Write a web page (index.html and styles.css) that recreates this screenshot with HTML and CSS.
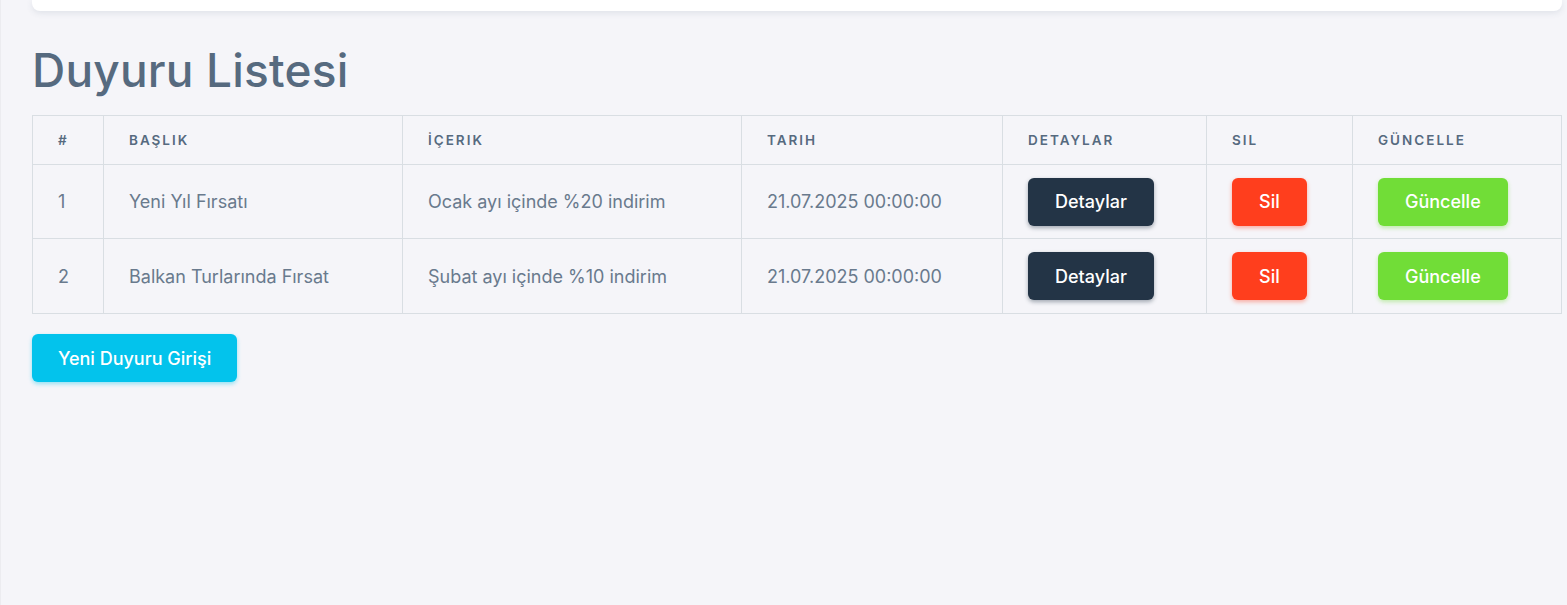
FILE: index.html
```html
<!DOCTYPE html>
<html lang="en">
<head>
<meta charset="utf-8">
<title>Duyuru Listesi</title>
<link rel="stylesheet" href="styles.css">
</head>
<body>
<div class="page">
  <div class="topbar"></div>
  <h1 class="title">Duyuru Listesi</h1>
  <table class="list">
    <colgroup>
      <col class="c-num"><col class="c-title"><col class="c-content"><col class="c-date"><col class="c-det"><col class="c-del"><col class="c-upd">
    </colgroup>
    <thead>
      <tr><th>#</th><th>BAŞLIK</th><th>İÇERIK</th><th>TARIH</th><th>DETAYLAR</th><th>SIL</th><th>GÜNCELLE</th></tr>
    </thead>
    <tbody>
      <tr>
        <td>1</td><td>Yeni Yıl Fırsatı</td><td>Ocak ayı içinde %20 indirim</td><td>21.07.2025 00:00:00</td>
        <td><a class="btn btn-dark">Detaylar</a></td>
        <td><a class="btn btn-danger">Sil</a></td>
        <td><a class="btn btn-success">Güncelle</a></td>
      </tr>
      <tr>
        <td>2</td><td>Balkan Turlarında Fırsat</td><td>Şubat ayı içinde %10 indirim</td><td>21.07.2025 00:00:00</td>
        <td><a class="btn btn-dark">Detaylar</a></td>
        <td><a class="btn btn-danger">Sil</a></td>
        <td><a class="btn btn-success">Güncelle</a></td>
      </tr>
    </tbody>
  </table>
  <div class="actions"><a class="btn btn-info">Yeni Duyuru Girişi</a></div>
</div>
</body>
</html>
```

FILE: styles.css
```css
html, body {
  margin: 0;
  padding: 0;
  height: 100%;
}
body {
  background: #f5f5f9;
  font-family: "Inter", "Noto Sans", sans-serif;
  color: #697a8d;
  border-left: 1px solid #ececf0;
  box-sizing: border-box;
}
.page {
  padding: 0 5px 0 31px;
}
.topbar {
  height: 11px;
  background: #fff;
  border-radius: 0 0 8px 8px;
  box-shadow: 0 2px 6px rgba(67, 89, 113, 0.12);
}
.title {
  margin: 34px 0 20px 0;
  font-size: 46px;
  line-height: 50px;
  font-weight: 500;
  color: #566a7f;
  letter-spacing: 0.2px;
}
.list {
  width: 100%;
  border-collapse: collapse;
  table-layout: fixed;
}
.c-num { width: 71px; }
.c-title { width: 299px; }
.c-content { width: 339px; }
.c-date { width: 261px; }
.c-det { width: 204px; }
.c-del { width: 146px; }
.list th, .list td {
  border: 1px solid #d9dee3;
  text-align: left;
  padding: 0 25px;
}
.list th {
  height: 48px;
  font-size: 13.5px;
  font-weight: 600;
  letter-spacing: 2px;
  color: #566a7f;
}
.list td {
  height: 73px;
  font-size: 18px;
  white-space: nowrap;
}
.list tbody tr:last-child td {
  height: 74px;
}
.btn {
  display: inline-flex;
  align-items: center;
  justify-content: center;
  height: 48px;
  padding: 0 27px;
  border-radius: 6px;
  color: #fff;
  font-size: 18px;
  font-weight: 500;
  box-sizing: border-box;
}
.btn-dark {
  background: #233446;
  box-shadow: 0 2px 4px rgba(35, 52, 70, 0.4);
}
.btn-danger {
  background: #ff3e1d;
  box-shadow: 0 2px 4px rgba(255, 62, 29, 0.4);
}
.btn-success {
  background: #71dd37;
  box-shadow: 0 2px 4px rgba(113, 221, 55, 0.4);
}
.btn-info {
  padding: 0 26px;
  background: #03c3ec;
  box-shadow: 0 2px 4px rgba(3, 195, 236, 0.4);
}
.actions {
  margin-top: 20px;
}
```
